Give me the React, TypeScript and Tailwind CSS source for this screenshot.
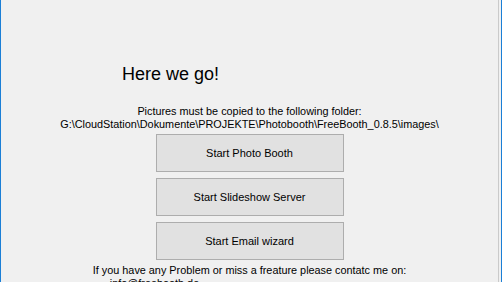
import React from 'react';

const buttons = ['Start Photo Booth', 'Start Slideshow Server', 'Start Email wizard'];

export default function App() {
  return (
    <div className="flex h-[282px] w-[502px] overflow-hidden bg-[#f0f0f0] font-['Liberation_Sans',Arial,sans-serif] text-black">
      <div className="w-px shrink-0 bg-[#1b7fd6]" />
      <div className="flex flex-1 flex-col">
        <div className="pl-[121px] pt-[64px] text-[18px] leading-[20px]">Here we go!</div>

        <div className="mt-[21px] text-center text-[10.85px] leading-[13px]">
          <div>Pictures must be copied to the following folder:</div>
          <div>G:\CloudStation\Dokumente\PROJEKTE\Photobooth\FreeBooth_0.8.5\images\</div>
        </div>

        <div className="mx-auto mt-[3px] flex w-[188px] flex-col gap-[6px]">
          {buttons.map((label) => (
            <button
              key={label}
              className="h-[38px] w-full border border-[#adadad] bg-[#e1e1e1] text-[11px] leading-[13px] text-black"
            >
              {label}
            </button>
          ))}
        </div>

        <div className="mt-[4px] text-center text-[10.85px] leading-[13px]">
          <div>If you have any Problem or miss a freature please contatc me on:</div>
          <div className="pr-[190px]">info@freebooth.de</div>
        </div>
      </div>
      <div className="w-px shrink-0 bg-[#cacaca]" />
      <div className="w-[2px] shrink-0" />
      <div className="w-px shrink-0 bg-[#1b7fd6]" />
    </div>
  );
}
